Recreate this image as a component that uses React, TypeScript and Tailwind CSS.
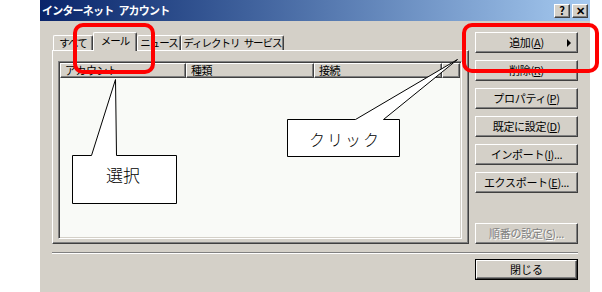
import type { ReactNode } from "react";

const raised =
  "border border-t-white border-l-white border-r-[#404040] border-b-[#404040] shadow-[inset_-1px_-1px_0_#808080]";

function WinButton({
  children,
  disabled,
  arrow,
}: {
  children: ReactNode;
  disabled?: boolean;
  arrow?: boolean;
}) {
  return (
    <div
      className={`relative flex h-[21px] w-[103px] items-center justify-center whitespace-nowrap bg-[#d4d0c8] text-[11px] leading-none tracking-[-0.3px] ${raised} ${
        disabled ? "text-[#808080] [text-shadow:1px_1px_0_#ffffff]" : "text-black"
      }`}
    >
      <span>{children}</span>
      {arrow && (
        <span className="absolute right-[6px] top-[6px] h-0 w-0 border-y-[4px] border-l-[4px] border-y-transparent border-l-black" />
      )}
    </div>
  );
}

function Tab({ children, width, selected }: { children: ReactNode; width: string; selected?: boolean }) {
  return (
    <div
      className={`flex items-center justify-center whitespace-nowrap bg-[#d4d0c8] text-[10.5px] leading-none tracking-[-1px] text-black border-t border-l border-t-white border-l-white border-r border-r-[#404040] shadow-[inset_-1px_0_0_#808080] rounded-t-[2px] ${width} ${
        selected ? "relative z-10 -mb-px h-[19px] pb-[2px]" : "h-[15px]"
      }`}
    >
      {children}
    </div>
  );
}

function HeaderCell({ label, width }: { label: string; width: string }) {
  return (
    <div
      className={`flex h-[15px] shrink-0 items-center bg-[#d4d0c8] pl-[4px] text-[11px] leading-none tracking-[-0.5px] text-black ${raised} ${width}`}
    >
      {label}
    </div>
  );
}

export default function App() {
  return (
    <div className="relative h-[292px] w-[602px] overflow-hidden bg-white font-['Noto_Sans_CJK_JP','Liberation_Sans',sans-serif]">
      <div className="ml-[40px] flex h-full w-[550px] flex-col bg-[#d4d0c8]">
        {/* タイトルバー */}
        <div className="flex h-[21px] items-center justify-between bg-linear-to-r from-[#0a246a] to-[#a6caf0] pl-[2px] pr-[2px]">
          <span className="flex text-[11px] font-bold leading-none tracking-[-0.8px] text-white">
            <span>インターネット</span>
            <span className="w-[5px]" />
            <span>アカウント</span>
          </span>
          <div className="flex gap-[2px]">
            <div className={`flex h-[14px] w-[16px] items-center justify-center bg-[#d4d0c8] text-[11px] font-bold leading-none text-black ${raised}`}>
              ?
            </div>
            <div className={`flex h-[14px] w-[16px] items-center justify-center bg-[#d4d0c8] text-[11px] font-bold leading-none text-black ${raised}`}>
              ✕
            </div>
          </div>
        </div>

        <div className="px-[12px] pt-[11px]">
          <div className="flex gap-[6px]">
            {/* タブ + リスト */}
            <div className="flex w-[417px] flex-col">
              <div className="flex h-[18px] items-end pl-[1px]">
                <Tab width="w-[40px]">すべて</Tab>
                <Tab width="w-[44px]" selected>
                  メール
                </Tab>
                <Tab width="w-[44px]">ニュース</Tab>
                <Tab width="w-[103px]">
                  ディレクトリ<span className="w-[4px]" />サービス
                </Tab>
              </div>
              <div className={`h-[194px] bg-[#d4d0c8] pl-[5px] pt-[10px] ${raised}`}>
                <div className="h-[178px] w-[404px] border border-t-[#808080] border-l-[#808080] border-r-white border-b-white bg-[#f9faf7] p-px shadow-[inset_1px_1px_0_#404040,inset_-1px_-1px_0_#d4d0c8]">
                  <div className="flex">
                    <HeaderCell label="アカウント" width="w-[126px]" />
                    <HeaderCell label="種類" width="w-[128px]" />
                    <HeaderCell label="接続" width="w-[128px]" />
                    <HeaderCell label="" width="w-[18px]" />
                  </div>
                </div>
              </div>
            </div>

            {/* ボタン */}
            <div className="flex h-[212px] flex-col gap-[7px]">
              <WinButton arrow>
                追加(<span className="underline">A</span>)
              </WinButton>
              <WinButton>
                削除(<span className="underline">R</span>)
              </WinButton>
              <WinButton>
                プロパティ(<span className="underline">P</span>)
              </WinButton>
              <WinButton>
                既定に設定(<span className="underline">D</span>)
              </WinButton>
              <WinButton>
                インポート(<span className="underline">I</span>)...
              </WinButton>
              <WinButton>
                エクスポート(<span className="underline">E</span>)...
              </WinButton>
              <div className="mt-auto">
                <WinButton disabled>
                  順番の設定(<span className="underline">S</span>)...
                </WinButton>
              </div>
            </div>
          </div>

          <div className="mt-[8px] h-[2px] w-[526px] border-t border-t-[#808080] border-b border-b-white" />

          <div className="mt-[5px] flex w-[526px] justify-end">
            <div className="border border-black">
              <div className={`flex h-[19px] w-[101px] items-center justify-center bg-[#d4d0c8] text-[11px] leading-none text-black ${raised}`}>
                閉じる
              </div>
            </div>
          </div>
        </div>
      </div>

      {/* 吹き出し */}
      <svg className="pointer-events-none absolute left-0 top-0" width="602" height="292">
        <polygon
          points="72.5,155.5 91.5,155.5 115.5,79.5 116.5,155.5 176.5,155.5 176.5,203.5 72.5,203.5"
          fill="#ffffff"
          stroke="#000000"
          strokeWidth="1"
        />
        <polygon
          points="287.5,119.5 355.5,119.5 457.5,59.5 383.5,119.5 399.5,119.5 399.5,156.5 287.5,156.5"
          fill="#ffffff"
          stroke="#000000"
          strokeWidth="1"
        />
      </svg>
      <div className="absolute left-[106px] top-[166px] text-[17px] font-light leading-none text-black">選択</div>
      <div className="absolute left-[309px] top-[131px] text-[16px] font-light leading-none tracking-[2px] text-black">クリック</div>

      {/* 赤枠 */}
      <div className="absolute left-[73px] top-[23px] h-[51px] w-[82px] rounded-[10px] border-4 border-[#ff0000]" />
      <div className="absolute left-[462px] top-[23px] h-[50px] w-[137px] rounded-[10px] border-4 border-[#ff0000]" />
    </div>
  );
}
